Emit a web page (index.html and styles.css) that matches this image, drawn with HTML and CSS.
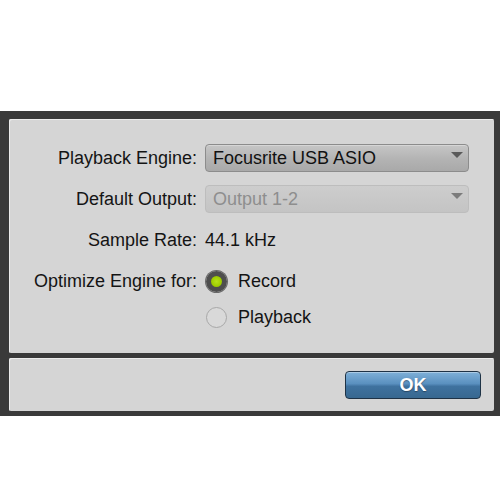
FILE: index.html
```html
<!DOCTYPE html>
<html>
<head>
<meta charset="utf-8">
<link rel="stylesheet" href="styles.css">
</head>
<body>
<div class="frame">
  <div class="panel main">
    <div class="row">
      <div class="label">Playback Engine:</div>
      <div class="select">
        <span>Focusrite USB ASIO</span>
        <span class="arrow"></span>
      </div>
    </div>
    <div class="row">
      <div class="label">Default Output:</div>
      <div class="select disabled">
        <span>Output 1-2</span>
        <span class="arrow"></span>
      </div>
    </div>
    <div class="row">
      <div class="label">Sample Rate:</div>
      <div class="value">44.1 kHz</div>
    </div>
    <div class="row top">
      <div class="label">Optimize Engine for:</div>
      <div class="radios">
        <div class="option"><span class="radio on"></span><span>Record</span></div>
        <div class="option"><span class="radio"></span><span>Playback</span></div>
      </div>
    </div>
  </div>
  <div class="panel footer">
    <button class="ok">OK</button>
  </div>
</div>
</body>
</html>
```

FILE: styles.css
```css
html, body {
  margin: 0;
  padding: 0;
  background: #ffffff;
}

body {
  font-family: "Liberation Sans", Arial, sans-serif;
  font-size: 18px;
  color: #141414;
}

.frame {
  margin-top: 111px;
  height: 305px;
  box-sizing: border-box;
  background: #3a3a3a;
  padding: 8px 6px 5px 9px;
  display: flex;
  flex-direction: column;
  gap: 5px;
}

.panel {
  background: #d5d5d5;
  border-radius: 2px;
  box-shadow: inset 1px 1px 0 #ececec;
}

.main {
  height: 234px;
  box-sizing: border-box;
  padding-top: 25px;
  display: flex;
  flex-direction: column;
  gap: 13px;
}

.row {
  display: grid;
  grid-template-columns: 188px 264px;
  column-gap: 8px;
  align-items: center;
  min-height: 28px;
}

.row.top {
  align-items: start;
}

.label {
  text-align: right;
  line-height: 28px;
  white-space: nowrap;
}

.value {
  line-height: 28px;
}

.select {
  height: 28px;
  box-sizing: border-box;
  border: 1px solid #8c8c8c;
  border-radius: 4px;
  background: linear-gradient(#c6c6c6, #b3b3b3 55%, #a9a9a9);
  display: flex;
  align-items: center;
  justify-content: space-between;
  padding: 0 5px 0 7px;
  color: #111;
  box-shadow: inset 0 1px 0 #d6d6d6;
}

.select.disabled {
  border-color: #bdbdbd;
  background: linear-gradient(#cdcdcd, #c4c4c4);
  color: #8e8e8e;
  box-shadow: none;
}

.arrow {
  width: 0;
  height: 0;
  border-left: 6px solid transparent;
  border-right: 6px solid transparent;
  border-top: 6px solid #5a5a5a;
  margin-bottom: 6px;
}

.select.disabled .arrow {
  border-top-color: #7c7c7c;
}

.radios {
  display: flex;
  flex-direction: column;
  gap: 8px;
}

.option {
  height: 28px;
  display: flex;
  align-items: center;
  gap: 11px;
  padding-left: 1px;
}

.radio {
  width: 21px;
  height: 21px;
  box-sizing: border-box;
  border-radius: 50%;
  border: 1px solid #a8a8a8;
  background: #d9d9d9;
  flex: none;
}

.radio.on {
  border: 5px solid #4e4e4e;
  background: radial-gradient(circle, #b6e21a 0, #9fcc00 60%, #86ad08 100%);
  box-shadow: 0 0 0 1px #6a6a6a;
}

.footer {
  height: 53px;
  box-sizing: border-box;
  padding: 13px 13px 12px 0;
  display: flex;
  justify-content: flex-end;
}

.ok {
  width: 136px;
  height: 28px;
  border: 1px solid #1f3346;
  border-radius: 4px;
  background: linear-gradient(#7fb0d8, #5a90bf 45%, #3f729f 55%, #386890);
  color: #ffffff;
  font-family: "Liberation Sans", Arial, sans-serif;
  font-weight: bold;
  font-size: 18px;
  padding: 0;
  text-shadow: 0 1px 1px rgba(0, 0, 0, 0.35);
  box-shadow: inset 0 1px 0 rgba(255, 255, 255, 0.35);
}
```
